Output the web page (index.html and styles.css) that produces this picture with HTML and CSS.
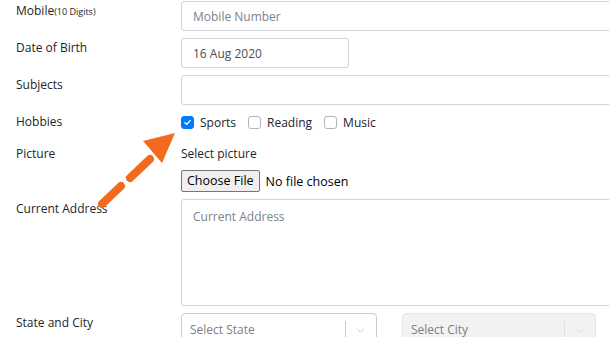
FILE: index.html
```html
<!DOCTYPE html>
<html lang="en">
<head>
    <meta charset="UTF-8">
    <meta name="viewport" content="width=device-width, initial-scale=1.0">
    <title>Practice Form</title>
    <link rel="stylesheet" href="styles.css">
</head>
<body>
    <div class="form-wrap">
        <div class="form-row row-mobile">
            <label class="form-label">Mobile<small>(10 Digits)</small></label>
            <input class="form-control wide" type="text" placeholder="Mobile Number">
        </div>
        <div class="form-row">
            <label class="form-label">Date of Birth</label>
            <input class="form-control date" type="text" value="16 Aug 2020">
        </div>
        <div class="form-row">
            <label class="form-label">Subjects</label>
            <div class="form-control wide"></div>
        </div>
        <div class="form-row row-hobbies">
            <label class="form-label">Hobbies</label>
            <div class="checks">
                <label class="check"><span class="box checked"><svg viewBox="0 0 12 12" width="9" height="9"><path d="M2.5 6.2 L5 8.5 L9.5 3.5" fill="none" stroke="#fff" stroke-width="1.8" stroke-linecap="round" stroke-linejoin="round"/></svg></span>Sports</label>
                <label class="check"><span class="box"></span>Reading</label>
                <label class="check"><span class="box"></span>Music</label>
            </div>
        </div>
        <div class="form-row row-picture">
            <label class="form-label">Picture</label>
            <div class="picture">
                <div class="pic-label">Select picture</div>
                <div class="file"><span class="file-btn">Choose File</span><span class="file-name">No file chosen</span></div>
            </div>
        </div>
        <div class="form-row">
            <label class="form-label">Current Address</label>
            <div class="form-control wide textarea">Current Address</div>
        </div>
        <div class="form-row">
            <label class="form-label state-label">State and City</label>
            <div class="selects">
                <div class="select">
                    <span class="select-text">Select State</span>
                    <span class="select-sep"></span>
                    <svg class="chev" viewBox="0 0 20 20" width="13" height="13"><path d="M4.5 7.5 L10 12.5 L15.5 7.5" fill="none" stroke="#cccccc" stroke-width="1.5"/></svg>
                </div>
                <div class="select disabled">
                    <span class="select-text">Select City</span>
                    <span class="select-sep"></span>
                    <svg class="chev" viewBox="0 0 20 20" width="13" height="13"><path d="M4.5 7.5 L10 12.5 L15.5 7.5" fill="none" stroke="#d6d6d6" stroke-width="1.5"/></svg>
                </div>
            </div>
        </div>

        <!-- highlight arrow pointing at the Sports checkbox -->
        <svg class="arrow" width="120" height="110" viewBox="0 0 120 110">
            <path d="M12 94 L31 76 M40 68 L60 49" stroke="#f26a1b" stroke-width="8" stroke-linecap="round" fill="none"/>
            <polygon points="85,23 53,31 72,53" fill="#f26a1b"/>
        </svg>
    </div>
</body>
</html>
```

FILE: styles.css
```css
/* page scaled like the practice form screenshot */
body {
    margin: 0;
    font-family: "Open Sans", Arial, sans-serif;
    font-size: 12px;
    color: #212529;
    overflow: hidden;
    background: #fff;
}
.form-wrap {
    position: relative;
    padding-top: 1px;
    width: 700px;
}
.form-row {
    display: grid;
    grid-template-columns: 181px 1fr;
    margin-bottom: 7px;
}
.form-label {
    padding: 1px 0 0 16px;
    line-height: 18px;
}
.form-label small {
    font-size: 9px;
}
.form-control {
    box-sizing: border-box;
    height: 30px;
    border: 1px solid #ced4da;
    border-radius: 3px;
    padding: 0 11px;
    font-family: inherit;
    font-size: 12px;
    color: #495057;
    background: #fff;
    outline: none;
}
.form-control::placeholder {
    color: #7b828a;
}
.wide {
    width: 520px;
}
.date {
    width: 168px;
}
.row-hobbies {
    height: 20px;
    margin-bottom: 13px;
    align-items: center;
}
.row-hobbies .form-label {
    padding-top: 0;
}
.checks {
    display: flex;
    align-items: center;
    gap: 12px;
}
.check {
    display: flex;
    align-items: center;
    gap: 6px;
}
.box {
    box-sizing: border-box;
    width: 13px;
    height: 13px;
    border: 1px solid #adb5bd;
    border-radius: 3px;
    background: #fff;
    display: flex;
    align-items: center;
    justify-content: center;
}
.box.checked {
    background: #007bff;
    border-color: #007bff;
}
.row-picture .form-label {
    padding-top: 0;
}
.pic-label {
    line-height: 18px;
    margin-bottom: 7px;
}
.file {
    display: flex;
    align-items: center;
    gap: 6px;
}
.file-btn {
    box-sizing: border-box;
    height: 22px;
    line-height: 20px;
    padding: 0 5px;
    background: #efefef;
    border: 1px solid #767676;
    border-radius: 2px;
    color: #000;
    font-size: 12.5px;
}
.file-name {
    color: #000;
    font-size: 12.5px;
}
.textarea {
    height: 107px;
    padding-top: 8px;
    color: #7b828a;
    line-height: 18px;
}
.state-label {
    padding-top: 1px;
}
.selects {
    display: flex;
    gap: 25px;
}
.select {
    box-sizing: border-box;
    width: 196px;
    height: 31px;
    border: 1px solid #cccccc;
    border-radius: 4px;
    display: flex;
    align-items: center;
    padding-left: 8px;
    color: #808080;
}
.select.disabled {
    width: 194px;
    background: #f2f2f2;
    border-color: #e6e6e6;
}
.select-text {
    flex: 1;
    padding-top: 1px;
}
.select-sep {
    width: 1px;
    height: 19px;
    background: #cccccc;
    margin-top: 4px;
}
.select.disabled .select-sep {
    background: #e0e0e0;
}
.chev {
    margin: 4px 9px 0 8px;
}
.arrow {
    position: absolute;
    left: 90px;
    top: 110px;
}
```
